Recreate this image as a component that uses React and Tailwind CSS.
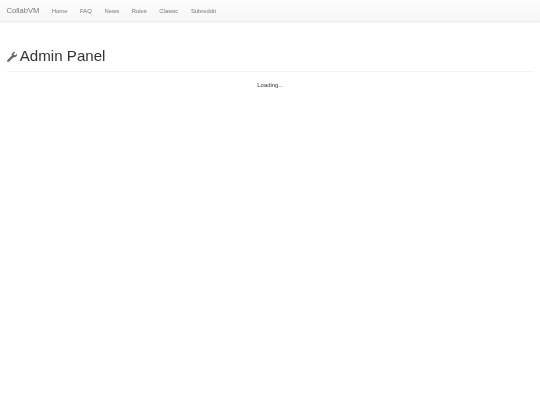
import React from "react";

function Wrench() {
  return (
    <svg viewBox="0 0 16 16" className="w-[10px] h-[10px] mr-[3px] mt-[3px] text-[#666]" fill="currentColor">
      <path d="M15.8 2.6 13.2 5.2 11 4.9 10.7 2.8 13.3.2C11.7-.3 10 .1 8.9 1.2 7.8 2.3 7.4 3.9 7.8 5.4L.5 13.2c-.5.5-.5 1.3 0 1.8l.5.5c.5.5 1.3.5 1.8 0l7.8-7.3c1.5.4 3.1 0 4.2-1.1 1.1-1.1 1.5-2.9 1-4.5z" />
    </svg>
  );
}

export default function App() {
  const links = ["Home", "FAQ", "News", "Rules", "Classic", "Subreddit"];
  return (
    <div className="min-h-[405px] bg-white text-[#333] font-['Liberation_Sans',Arial,sans-serif] text-[5.88px] blur-[0.25px]">
      <nav className="h-[21.5px] flex items-center pl-[6.5px] pr-[6.3px] pt-[2px] border-b border-[#ececec] bg-gradient-to-b from-[#fdfdfd] to-[#f6f6f6] shadow-[0_1px_2px_rgba(0,0,0,0.04)]">
        <span className="text-[7.56px] text-[#777] mr-[12.6px] mb-[2px]">CollabVM</span>
        <div className="flex gap-[12.6px] text-[#777]">
          {links.map((l) => (
            <span key={l}>{l}</span>
          ))}
        </div>
      </nav>
      <div className="pl-[6.8px] pr-[6.3px]">
        <div className="mt-[25px] pb-[6px] border-b border-[#f3f3f3] flex items-center">
          <Wrench />
          <h1 className="text-[15.12px] leading-[18px] font-normal">Admin Panel</h1>
        </div>
        <p className="text-center mt-[9px] leading-[8px]">Loading...</p>
      </div>
    </div>
  );
}
